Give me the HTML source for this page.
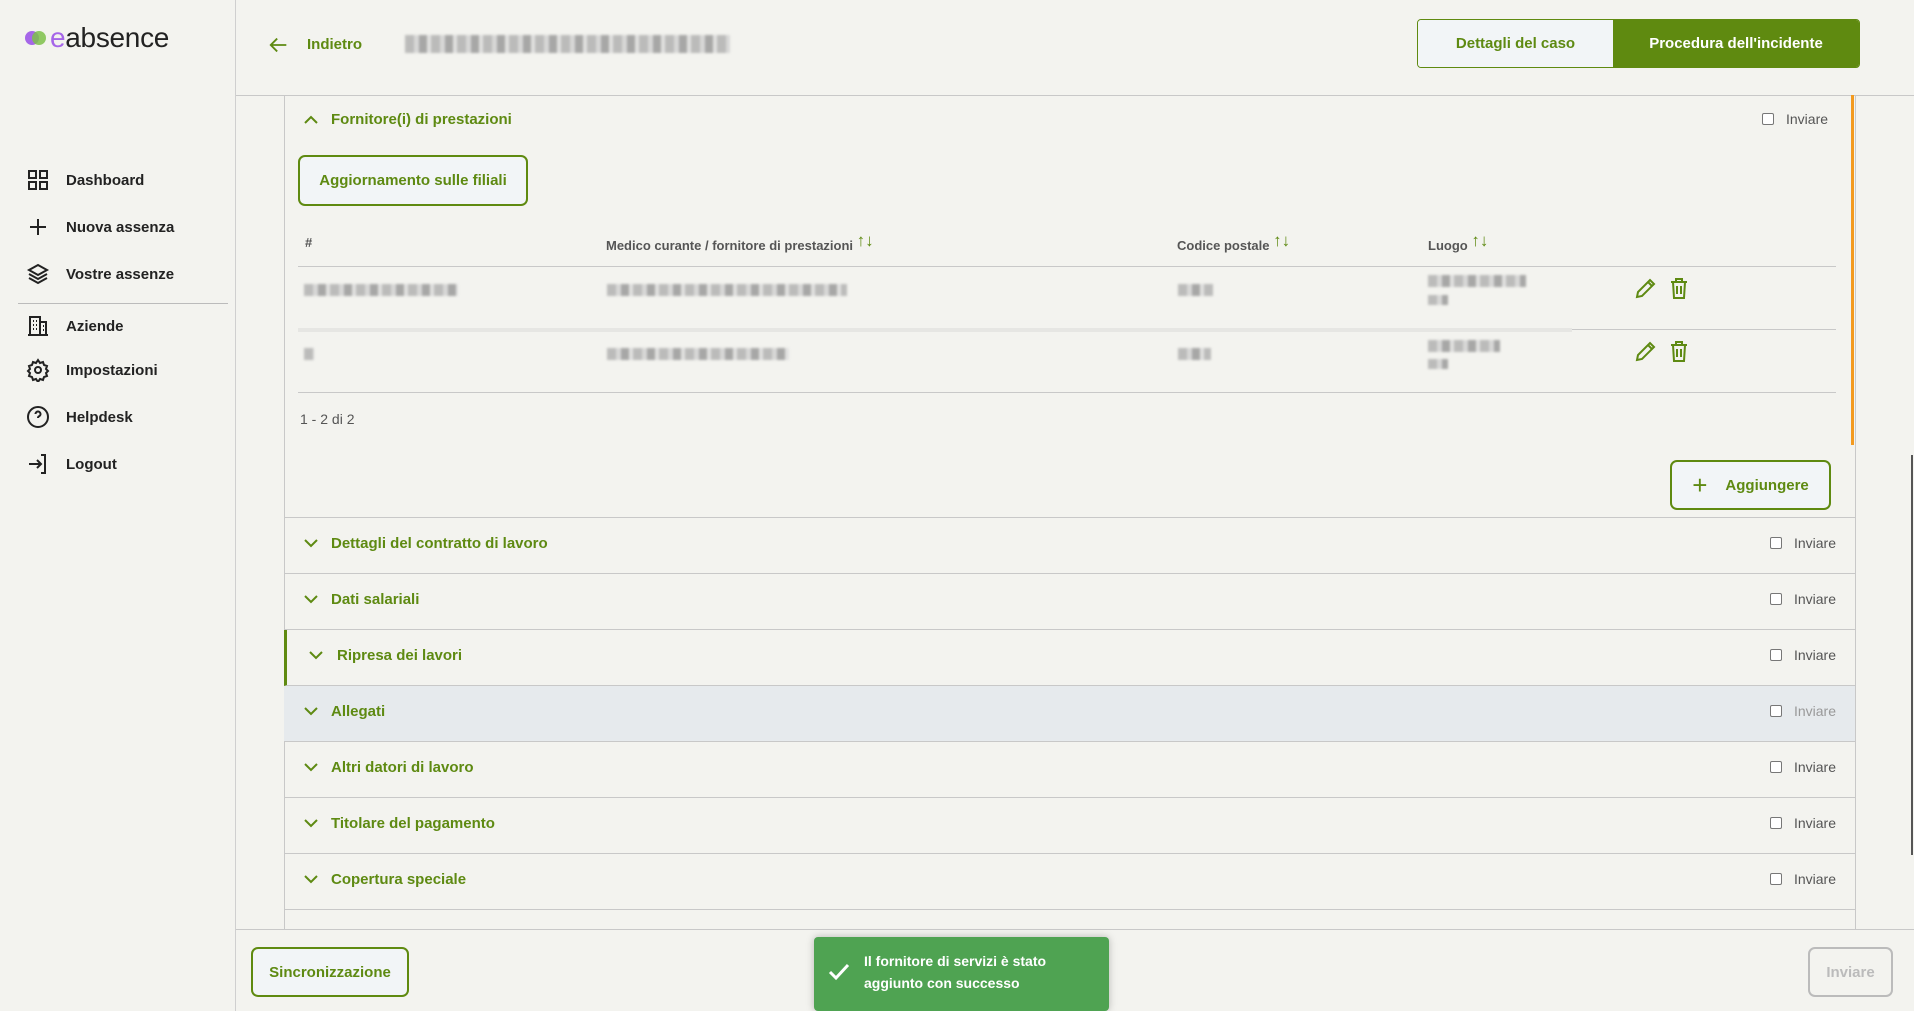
<!DOCTYPE html>
<html><head><meta charset="utf-8"><style>
*{box-sizing:border-box;margin:0;padding:0}
body{width:1914px;height:1011px;overflow:hidden;background:#f3f3ef;font-family:"Liberation Sans",sans-serif;color:#222;position:relative}
.a{position:absolute}
.g{color:#5e8a12}
.side{left:0;top:0;width:236px;height:1011px;border-right:1px solid #cfcfcf}
.nav{left:26px;font-size:15px;font-weight:bold;color:#222;display:flex;align-items:center}
.nav svg{width:24px;height:24px;margin-right:16px}
.blur{background:repeating-linear-gradient(90deg,#a9a9a9 0 9px,#cfcfcf 9px 14px,#8e8e8e 14px 22px,#dcdcdc 22px 26px);opacity:.75;filter:blur(1.2px)}
.row{left:284px;width:1571px;height:56px;border-bottom:1px solid #c8c8c8}
.row .t{position:absolute;left:47px;top:17px;font-size:15px;font-weight:bold;color:#5e8a12}
.row .ch{position:absolute;left:20px;top:20px}
.row .inv{position:absolute;right:19px;top:17px;font-size:14px;color:#555;display:flex;align-items:center}
.cb{width:12px;height:12px;border:1px solid #777;border-radius:2px;background:#fff;margin-right:12px}
.btn{border:2px solid #5f8a10;border-radius:7px;background:#f2f5f7;color:#5e8a12;font-weight:bold;font-size:15px;display:flex;align-items:center;justify-content:center}
.th{top:235px;font-size:13px;color:#555;font-weight:bold}
.ar{color:#5e8a12;font-size:17px;font-weight:bold;position:relative;top:-4px}
.line{height:1px;background:#c8c8c8}
</style></head><body>
<div class="a side"></div>
<div class="a" style="left:25px;top:22px;display:flex;align-items:center">
<svg width="22" height="18"><circle cx="7" cy="9" r="7" fill="#a566e8"/><circle cx="14" cy="9" r="7" fill="#7cc04a" opacity=".85"/></svg>
<span style="font-size:28px;margin-left:3px;letter-spacing:-.3px"><span style="color:#a566e8">e</span>absence</span></div>
<div class="a nav" style="top:168px"><svg viewBox="0 0 24 24" fill="none" stroke="#222" stroke-width="2"><rect x="3" y="3" width="7" height="7"/><rect x="14" y="3" width="7" height="7"/><rect x="3" y="14" width="7" height="7"/><rect x="14" y="14" width="7" height="7"/></svg>Dashboard</div>
<div class="a nav" style="top:215px"><svg viewBox="0 0 24 24" fill="none" stroke="#222" stroke-width="2"><path d="M12 4v16M4 12h16"/></svg>Nuova assenza</div>
<div class="a nav" style="top:262px"><svg viewBox="0 0 24 24" fill="none" stroke="#222" stroke-width="2"><path d="M12 3l9 5-9 5-9-5z"/><path d="M3 12l9 5 9-5M3 16l9 5 9-5"/></svg>Vostre assenze</div>
<div class="a" style="left:18px;top:303px;width:210px;height:1px;background:#bbb"></div>
<div class="a nav" style="top:314px"><svg viewBox="0 0 24 24" fill="none" stroke="#222" stroke-width="2"><path d="M4 21V3h10v18M14 8h6v13M2 21h20M7 7h1M10 7h1M7 11h1M10 11h1M7 15h1M10 15h1M17 12h1M17 16h1"/></svg>Aziende</div>
<div class="a nav" style="top:358px"><svg viewBox="0 0 24 24" fill="none" stroke="#222" stroke-width="2"><circle cx="12" cy="12" r="3"/><path d="M12 2l2 3 3-1 1 3 3 1-1 3 2 2-2 2 1 3-3 1-1 3-3-1-2 3-2-3-3 1-1-3-3-1 1-3-2-2 2-2-1-3 3-1 1-3 3 1z"/></svg>Impostazioni</div>
<div class="a nav" style="top:405px"><svg viewBox="0 0 24 24" fill="none" stroke="#222" stroke-width="2"><circle cx="12" cy="12" r="10"/><path d="M9.5 9a2.5 2.5 0 1 1 3.5 2.3c-.7.4-1 1-1 1.7M12 17h.01"/></svg>Helpdesk</div>
<div class="a nav" style="top:452px"><svg viewBox="0 0 24 24" fill="none" stroke="#222" stroke-width="2"><path d="M15 3h4v18h-4M3 12h12M11 8l4 4-4 4"/></svg>Logout</div>

<svg class="a" style="left:268px;top:34px" width="22" height="22" viewBox="0 0 24 24" fill="none" stroke="#5e8a12" stroke-width="2"><path d="M20 12H4M10 5l-7 7 7 7"/></svg>
<div class="a g" style="left:307px;top:36px;font-size:15px;font-weight:bold">Indietro</div>
<div class="a blur" style="left:405px;top:35px;width:325px;height:18px"></div>
<div class="a" style="left:1417px;top:19px;width:443px;height:49px;border:1px solid #5f8a10;border-radius:4px;overflow:hidden;display:flex">
<div class="g" style="width:195px;background:#f2f5f7;display:flex;align-items:center;justify-content:center;font-size:15px;font-weight:bold">Dettagli del caso</div>
<div style="flex:1;background:#5f8a10;color:#fff;display:flex;align-items:center;justify-content:center;font-size:15px;font-weight:bold">Procedura dell'incidente</div></div>
<div class="a line" style="left:236px;top:95px;width:1678px"></div>

<div class="a" style="left:284px;top:95px;width:1px;height:834px;background:#c8c8c8"></div>
<div class="a" style="left:1855px;top:95px;width:1px;height:834px;background:#c8c8c8"></div>
<div class="a" style="left:1851px;top:95px;width:3px;height:350px;background:#f39a1f"></div>
<div class="a" style="left:1911px;top:455px;width:2px;height:400px;background:#555"></div>

<svg class="a" style="left:304px;top:115px" width="14" height="10" viewBox="0 0 14 10" fill="none" stroke="#5e8a12" stroke-width="2"><path d="M1 8l6-6 6 6"/></svg>
<div class="a g" style="left:331px;top:111px;font-size:15px;font-weight:bold">Fornitore(i) di prestazioni</div>
<div class="a" style="left:1762px;top:111px;font-size:14px;color:#555;display:flex;align-items:center"><div class="cb"></div>Inviare</div>
<div class="a btn" style="left:298px;top:155px;width:230px;height:51px">Aggiornamento sulle filiali</div>

<div class="a th" style="left:305px">#</div>
<div class="a th" style="left:606px">Medico curante / fornitore di prestazioni <span class="ar">↑↓</span></div>
<div class="a th" style="left:1177px">Codice postale <span class="ar">↑↓</span></div>
<div class="a th" style="left:1428px">Luogo <span class="ar">↑↓</span></div>
<div class="a line" style="left:298px;top:266px;width:1538px"></div>
<div class="a" style="left:298px;top:328px;width:1274px;height:4px;background:#e6e6e3"></div>
<div class="a line" style="left:1572px;top:329px;width:264px"></div>
<div class="a line" style="left:298px;top:392px;width:1538px"></div>
<div class="a blur" style="left:304px;top:284px;width:154px;height:12px"></div>
<div class="a blur" style="left:607px;top:284px;width:240px;height:12px"></div>
<div class="a blur" style="left:1178px;top:284px;width:35px;height:12px"></div>
<div class="a blur" style="left:1428px;top:275px;width:98px;height:12px"></div>
<div class="a blur" style="left:1428px;top:295px;width:20px;height:10px"></div>
<div class="a blur" style="left:304px;top:348px;width:10px;height:12px"></div>
<div class="a blur" style="left:607px;top:348px;width:182px;height:12px"></div>
<div class="a blur" style="left:1178px;top:348px;width:33px;height:12px"></div>
<div class="a blur" style="left:1428px;top:340px;width:72px;height:12px"></div>
<div class="a blur" style="left:1428px;top:359px;width:20px;height:10px"></div>
<svg class="a" style="left:1634px;top:276px" width="24" height="24" viewBox="0 0 24 24" fill="none" stroke="#5e8a12" stroke-width="2"><path d="M3 21l1-5L16 4l4 4L8 20zM14 6l4 4"/></svg>
<svg class="a" style="left:1668px;top:276px" width="22" height="24" viewBox="0 0 22 24" fill="none" stroke="#5e8a12" stroke-width="2"><path d="M3 6h16M8 6V3h6v3M5 6l1 16h10l1-16M9 10v8M13 10v8"/></svg>
<svg class="a" style="left:1634px;top:339px" width="24" height="24" viewBox="0 0 24 24" fill="none" stroke="#5e8a12" stroke-width="2"><path d="M3 21l1-5L16 4l4 4L8 20zM14 6l4 4"/></svg>
<svg class="a" style="left:1668px;top:339px" width="22" height="24" viewBox="0 0 22 24" fill="none" stroke="#5e8a12" stroke-width="2"><path d="M3 6h16M8 6V3h6v3M5 6l1 16h10l1-16M9 10v8M13 10v8"/></svg>
<div class="a" style="left:300px;top:411px;font-size:14px;color:#555">1 - 2 di 2</div>
<div class="a btn" style="left:1670px;top:460px;width:161px;height:50px"><span style="font-size:26px;font-weight:normal;margin-right:18px">+</span>Aggiungere</div>
<div class="a line" style="left:284px;top:517px;width:1571px"></div>

<div class="a row" style="top:518px"><svg class="ch" width="14" height="10" viewBox="0 0 14 10" fill="none" stroke="#5e8a12" stroke-width="2"><path d="M1 2l6 6 6-6"/></svg><div class="t">Dettagli del contratto di lavoro</div><div class="inv"><div class="cb"></div>Inviare</div></div>
<div class="a row" style="top:574px"><svg class="ch" width="14" height="10" viewBox="0 0 14 10" fill="none" stroke="#5e8a12" stroke-width="2"><path d="M1 2l6 6 6-6"/></svg><div class="t">Dati salariali</div><div class="inv"><div class="cb"></div>Inviare</div></div>
<div class="a row" style="top:630px;border-left:3px solid #5f8a10"><svg class="ch" style="left:22px" width="14" height="10" viewBox="0 0 14 10" fill="none" stroke="#5e8a12" stroke-width="2"><path d="M1 2l6 6 6-6"/></svg><div class="t" style="left:50px">Ripresa dei lavori</div><div class="inv"><div class="cb"></div>Inviare</div></div>
<div class="a row" style="top:686px;background:#e6eaed"><svg class="ch" width="14" height="10" viewBox="0 0 14 10" fill="none" stroke="#5e8a12" stroke-width="2"><path d="M1 2l6 6 6-6"/></svg><div class="t">Allegati</div><div class="inv" style="color:#999"><div class="cb"></div>Inviare</div></div>
<div class="a row" style="top:742px"><svg class="ch" width="14" height="10" viewBox="0 0 14 10" fill="none" stroke="#5e8a12" stroke-width="2"><path d="M1 2l6 6 6-6"/></svg><div class="t">Altri datori di lavoro</div><div class="inv"><div class="cb"></div>Inviare</div></div>
<div class="a row" style="top:798px"><svg class="ch" width="14" height="10" viewBox="0 0 14 10" fill="none" stroke="#5e8a12" stroke-width="2"><path d="M1 2l6 6 6-6"/></svg><div class="t">Titolare del pagamento</div><div class="inv"><div class="cb"></div>Inviare</div></div>
<div class="a row" style="top:854px"><svg class="ch" width="14" height="10" viewBox="0 0 14 10" fill="none" stroke="#5e8a12" stroke-width="2"><path d="M1 2l6 6 6-6"/></svg><div class="t">Copertura speciale</div><div class="inv"><div class="cb"></div>Inviare</div></div>

<div class="a" style="left:236px;top:929px;width:1678px;height:82px;background:#f3f3ef;border-top:1px solid #c8c8c8"></div>
<div class="a btn" style="left:251px;top:947px;width:158px;height:50px">Sincronizzazione</div>
<div class="a" style="left:1808px;top:947px;width:85px;height:50px;border:2px solid #bbb;border-radius:7px;color:#bbb;font-weight:bold;font-size:15px;display:flex;align-items:center;justify-content:center">Inviare</div>
<div class="a" style="left:814px;top:937px;width:295px;height:74px;background:#4fa352;border-radius:4px;box-shadow:0 0 8px rgba(0,0,0,.25);color:#fff;font-size:14px;font-weight:bold;line-height:22px;padding:13px 0 0 50px">
<svg class="a" style="left:14px;top:26px" width="22" height="18" viewBox="0 0 22 18" fill="none" stroke="#fff" stroke-width="3"><path d="M2 9l6 6L20 2"/></svg>
Il fornitore di servizi è stato<br>aggiunto con successo</div>
</body></html>
